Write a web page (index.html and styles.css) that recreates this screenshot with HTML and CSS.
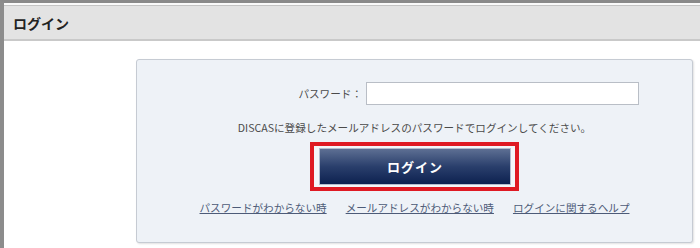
FILE: index.html
```html
<!DOCTYPE html>
<html lang="ja">
<head>
  <meta charset="UTF-8">
  <title>ログイン</title>
  <link rel="stylesheet" href="styles.css">
</head>
<body>
  <div class="page">
    <div class="page-header">
      <h1>ログイン</h1>
    </div>
    <div class="login-box">
      <div class="form-row">
        <label for="password">パスワード：</label>
        <input type="password" id="password">
      </div>
      <p class="note">DISCASに登録したメールアドレスのパスワードでログインしてください。</p>
      <div class="button-wrap">
        <div class="highlight">
          <button type="button" class="login-btn">ログイン</button>
        </div>
      </div>
      <ul class="help-links">
        <li><a href="#">パスワードがわからない時</a></li>
        <li><a href="#">メールアドレスがわからない時</a></li>
        <li><a href="#">ログインに関するヘルプ</a></li>
      </ul>
    </div>
  </div>
</body>
</html>
```

FILE: styles.css
```css
:root {
  --text: #4a4a4a;
  --link: #4d5b78;
  --panel-bg: #eef2f7;
  --panel-border: #c6cbd3;
  --red: #df1a23;
}

html, body {
  margin: 0;
  padding: 0;
  background: #ffffff;
}

body {
  font-family: "Noto Sans CJK JP", "Noto Sans", sans-serif;
  color: var(--text);
  height: 248px;
  overflow: hidden;
}

.page {
  border-left: 4px solid #8c8c8c;
  border-top: 3px solid #8a8a8a;
  height: 100%;
  box-sizing: border-box;
}

.page-header {
  border-top: 2px solid #fafafa;
  box-shadow: inset 0 1px 0 #c4c4c4;
  background: #e3e3e3;
  border-bottom: 2px solid #c9c9c9;
  height: 38px;
  display: flex;
  align-items: center;
  padding-left: 9px;
  box-sizing: border-box;
}

.page-header h1 {
  margin: 0;
  font-size: 14px;
  font-weight: bold;
  color: #222;
  padding-top: 2px;
}

.login-box {
  margin: 18px 0 0 132px;
  width: 557px;
  height: 184px;
  box-sizing: border-box;
  background: var(--panel-bg);
  border: 1px solid var(--panel-border);
  border-radius: 3px;
  box-shadow: 1px 1px 2px rgba(0, 0, 0, 0.12);
  padding-top: 22px;
}

.form-row {
  display: flex;
  align-items: center;
  height: 23px;
}

.form-row label {
  width: 225px;
  text-align: right;
  font-size: 10.6px;
  margin-right: 4px;
}

.form-row input {
  width: 273px;
  height: 23px;
  box-sizing: border-box;
  border: 1px solid #b9bec6;
  background: #ffffff;
  margin: 0;
  padding: 0 4px;
}

.note {
  margin: 16px 0 0;
  text-align: center;
  font-size: 10.6px;
  line-height: 14px;
}

.button-wrap {
  display: flex;
  justify-content: center;
  margin-top: 7px;
}

.highlight {
  border: 4px solid var(--red);
  padding: 2px 4px 2px 5px;
  background: #f4f6f9;
}

.login-btn {
  display: block;
  width: 192px;
  height: 37px;
  border: 1px solid #b4bfcf;
  background: linear-gradient(to bottom, #5d6f93 0%, #2a3f6c 50%, #0d2150 100%);
  color: #ffffff;
  font-family: inherit;
  font-size: 13px;
  font-weight: bold;
  letter-spacing: 1px;
  cursor: pointer;
}

.help-links {
  list-style: none;
  margin: 9px 0 0;
  padding: 0;
  display: flex;
  justify-content: center;
  gap: 19px;
  font-size: 10.6px;
  line-height: 16px;
}

.help-links a {
  color: var(--link);
  text-decoration: underline;
}
```
